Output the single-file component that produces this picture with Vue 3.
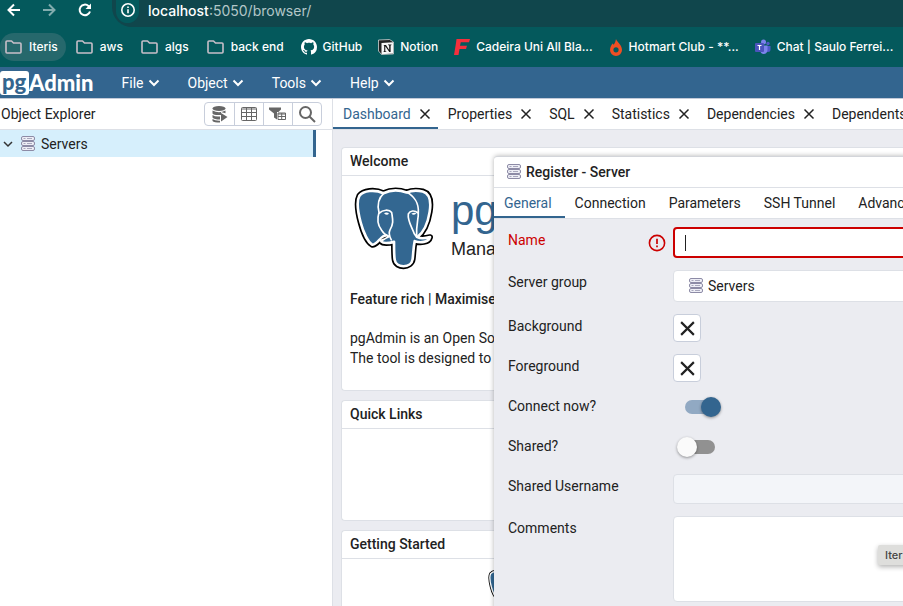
<script setup>
import { ref, h } from 'vue'

const menus = ['File', 'Object', 'Tools', 'Help']
const panels = ['Dashboard', 'Properties', 'SQL', 'Statistics', 'Dependencies', 'Dependents']
const dialogTabs = ['General', 'Connection', 'Parameters', 'SSH Tunnel', 'Advanced']
const bookmarks = [
  { label: 'Iteris', icon: 'folder', active: true },
  { label: 'aws', icon: 'folder' },
  { label: 'algs', icon: 'folder' },
  { label: 'back end', icon: 'folder' },
  { label: 'GitHub', icon: 'github' },
  { label: 'Notion', icon: 'notion' },
  { label: 'Cadeira Uni All Bla...', icon: 'f' },
  { label: 'Hotmart Club - **...', icon: 'flame' },
  { label: 'Chat | Saulo Ferrei...', icon: 'teams' },
]

const name = ref('')
const connectNow = ref(true)
const shared = ref(false)
const sharedUsername = ref('')
const comments = ref('')

const ServerIcon = () =>
  h('svg', { width: 14, height: 16, viewBox: '0 0 14 16', 'aria-hidden': 'true' },
    [1, 6, 11].flatMap((y) => [
      h('rect', { x: 0.5, y: y - 0.5, width: 13, height: 4, rx: 1.5, fill: '#eeeef6', stroke: '#8d8ba6' }),
      h('path', { d: `M2.5 ${y + 1.5}h2M6 ${y + 1.5}h5`, stroke: '#a9a8bd' }),
    ]))

const CloseIcon = () =>
  h('svg', { width: 12, height: 12, viewBox: '0 0 12 12', 'aria-hidden': 'true' },
    [h('path', { d: 'M1.5 1.5l9 9M10.5 1.5l-9 9', stroke: 'currentColor', 'stroke-width': 1.5, fill: 'none' })])

const outline = 'M152 158C126 146 92 150 80 166C70 184 76 216 84 246C92 276 106 305 118 312C126 316 136 302 146 292C152 286 160 284 166 288C154 294 146 298 146 303C152 310 168 308 184 304C184 324 184 346 186 358C190 384 236 384 240 356C242 340 242 322 246 302C262 308 288 306 292 290C284 292 266 296 254 290C272 276 286 246 291 214C296 184 294 160 270 153C252 149 236 150 222 156C200 148 174 148 152 158Z'
const Elephant = () =>
  h('svg', { viewBox: '64 140 240 248', 'aria-hidden': 'true' }, [
    h('path', { d: outline, fill: '#000', stroke: '#000', 'stroke-width': 18, 'stroke-linejoin': 'round' }),
    h('path', { d: outline, fill: '#336791', stroke: '#fff', 'stroke-width': 8, 'stroke-linejoin': 'round' }),
    h('path', {
      d: 'M154 158C138 172 133 192 139 216C134 232 134 252 146 268C152 278 158 284 168 288M140 218C150 207 170 206 177 216C180 236 184 248 172 268C168 276 168 284 176 298M222 155C244 166 258 188 257 214C258 236 250 252 252 286M256 218C246 208 232 210 227 220C224 240 236 256 245 280L252 290',
      fill: 'none', stroke: '#fff', 'stroke-width': 5, 'stroke-linecap': 'round', 'stroke-linejoin': 'round',
    }),
    h('path', { d: 'M154 218q8-4 15 1q-6 8-15-1ZM236 220q8-5 15-2q-7 9-15 2Z', fill: '#fff' }),
    h('path', { d: 'M144 297q8-8 20-10q-8 8-20 10Z', fill: '#000' }),
  ])
</script>

<template>
  <div class="page">
    <header class="chrome">
      <div class="toolbar">
        <button class="nav" aria-label="Back">
          <svg width="14" height="14" viewBox="0 0 14 14"><path d="M13 7H2M7 1.500L1.500 7L7 12.500" /></svg>
        </button>
        <button class="nav dim" aria-label="Forward">
          <svg width="14" height="14" viewBox="0 0 14 14"><path d="M1 7H12M7 1.500L12.500 7L7 12.500" /></svg>
        </button>
        <button class="nav" aria-label="Reload">
          <svg width="14" height="14" viewBox="0 0 14 14"><path d="M12 8.500A5.300 5.300 0 1 1 10.500 3L12 4.500" /><path class="solid" d="M13 .5V6H7.500Z" /></svg>
        </button>
        <div class="address">
          <span class="info">
            <svg width="16" height="16" viewBox="0 0 16 16"><circle cx="8" cy="8" r="6.200" fill="none" stroke="#fff" stroke-width="1.600" /><path d="M8 7.200V11.300M8 4.600V6.100" stroke="#fff" stroke-width="1.600" /></svg>
          </span>
          <span class="url"><b>localhost</b>:5050/browser/</span>
        </div>
      </div>
      <nav class="bookmarks">
        <a v-for="b in bookmarks" :key="b.label" href="#" class="bookmark" :class="{ active: b.active, folder: b.icon === 'folder' }">
          <svg v-if="b.icon === 'folder'" width="17" height="16" viewBox="0 0 17 16"><path d="M1 3Q1 2 2 2H6.500L8.500 4H15Q16 4 16 5V13Q16 14 15 14H2Q1 14 1 13Z" fill="none" stroke="#c9bfc9" stroke-width="1.600" stroke-linejoin="round" /></svg>
          <svg v-else-if="b.icon === 'github'" width="16" height="16" viewBox="0 0 16 16"><path fill="#fff" d="M8 0C3.580 0 0 3.580 0 8c0 3.540 2.290 6.530 5.470 7.590.4.070.55-.17.55-.38 0-.19-.01-.82-.01-1.490-2.010.37-2.530-.49-2.690-.94-.09-.23-.48-.94-.82-1.130-.28-.15-.68-.52-.01-.53.63-.01 1.080.58 1.230.82.72 1.210 1.870.87 2.330.66.07-.52.28-.87.51-1.070-1.780-.2-3.640-.89-3.640-3.950 0-.87.31-1.590.82-2.150-.08-.2-.36-1.020.08-2.120 0 0 .67-.21 2.200.82.64-.18 1.320-.27 2-.27s1.360.09 2 .27c1.530-1.040 2.200-.82 2.200-.82.44 1.100.16 1.920.08 2.120.51.56.82 1.270.82 2.150 0 3.070-1.870 3.750-3.650 3.950.29.25.54.73.54 1.480 0 1.070-.01 1.930-.01 2.200 0 .21.15.46.55.38A8.010 8.010 0 0 0 16 8c0-4.420-3.580-8-8-8Z" /></svg>
          <svg v-else-if="b.icon === 'notion'" width="16" height="16" viewBox="0 0 16 16"><path d="M.5 1L11.500 .5L15.500 3V15L3.500 15.500L.5 12Z" fill="#222" stroke="#e8e8e8" stroke-width=".7" /><path d="M3.500 4L15 3.300V14.500L3.500 15.200Z" fill="#f7f7f7" /><path d="M5.500 6H8L11.200 11V6.400L10 6V5.600H13.500V6L12.600 6.400V13H11.300L7.300 7.200V12.300L8.500 12.700V13H5.300V12.700L6.200 12.300V6.800Z" fill="#111" /></svg>
          <svg v-else-if="b.icon === 'f'" width="16" height="16" viewBox="0 0 16 16"><path d="M2.500 0H16L15 3.200H6.800L6 6.800H13L12 10H5.500L4.500 16H0L2 4Z" fill="#f52f3c" /></svg>
          <svg v-else-if="b.icon === 'flame'" width="14" height="17" viewBox="0 0 14 17"><path d="M7 0C8 3 13 6 13 11A6 6 0 0 1 1 11C1 8 2.500 6 3.500 4.500L4.800 5.800Q6.500 3.500 7 0Z" fill="#f04e23" /><circle cx="7" cy="10.800" r="2.600" fill="#04595c" /></svg>
          <svg v-else width="16" height="16" viewBox="0 0 16 16"><circle cx="13" cy="4.500" r="1.700" fill="#5059c9" /><circle cx="8.500" cy="3" r="2.500" fill="#7b83eb" /><path d="M11 7H15.500V11Q15.500 13 13 13H11Z" fill="#5059c9" /><path d="M5 6.500H12.500V11Q12 15 8.700 15Q5.500 15 5 11Z" fill="#7b83eb" /><rect y="4" width="9" height="9" rx="1" fill="#4b53bc" /><path d="M2.500 6.500H6.500M4.500 6.500V11" stroke="#fff" stroke-width="1.200" /></svg>
          <span>{{ b.label }}</span>
        </a>
      </nav>
    </header>

    <div class="appbar">
      <div class="brand"><span class="pg">pg</span><span class="admin">Admin</span></div>
      <button v-for="m in menus" :key="m" class="menu">
        {{ m }}
        <svg width="12" height="8" viewBox="0 0 12 8"><path d="M1.500 1.500L6 6L10.500 1.500" fill="none" stroke="currentColor" stroke-width="2" /></svg>
      </button>
    </div>

    <div class="workspace">
      <aside class="explorer">
        <div class="explorer-head">
          <span>Object Explorer</span>
          <div class="tools">
            <button aria-label="Query tool">
              <svg width="18" height="18" viewBox="0 0 18 18"><ellipse cx="8" cy="3.500" rx="6.500" ry="2.500" /><path d="M1.500 5.500Q8 9 14.500 5.500V8.200L10 7V10H5Q2 9.500 1.500 8.500ZM1.500 10Q4 12 9 11.500V14.500Q3 14.500 1.500 12.500ZM1.500 14Q4 16 9 15.800V17.500Q3 17.500 1.500 16Z" /><path d="M10 8L16.500 12L10 16.500Z" /></svg>
            </button>
            <button aria-label="View data">
              <svg width="18" height="16" viewBox="0 0 18 16"><path class="line" d="M1.500 2.500Q1.500 1.500 2.500 1.500H15.500Q16.500 1.500 16.500 2.500V13.500Q16.500 14.500 15.500 14.500H2.500Q1.500 14.500 1.500 13.500ZM1.500 3H16.500M1.500 6.500H16.500M1.500 10.500H16.500M6.500 2V14.500M11.500 2V14.500" /></svg>
            </button>
            <button aria-label="Filtered rows">
              <svg width="18" height="16" viewBox="0 0 18 16"><path d="M0 1.500H12V3.500L8 7.500V13.500L5 11.500V7.500L0 3.500Z" /><rect x="8" y="6" width="10" height="8.500" fill="#fff" /><path class="line" d="M9 7H16.500V13.500H9ZM9 8H16.500M9 10.500H16.500M12.700 7V13.500" /></svg>
            </button>
            <button aria-label="Search objects">
              <svg width="18" height="18" viewBox="0 0 18 18"><circle class="line" cx="7.500" cy="7.500" r="5.500" stroke-width="2" /><path class="line" d="M11.500 11.500L17 17" stroke-width="2" /></svg>
            </button>
          </div>
        </div>
        <div class="tree-row">
          <svg width="10" height="8" viewBox="0 0 10 8"><path d="M1 2L5 6L9 2" fill="none" stroke="#333" stroke-width="1.500" /></svg>
          <ServerIcon />
          <span>Servers</span>
        </div>
      </aside>

      <main class="content">
        <div class="tabs">
          <div v-for="(p, i) in panels" :key="p" class="tab" :class="{ current: i === 0 }">
            <a href="#">{{ p }}</a>
            <button class="close" :aria-label="'Close ' + p"><CloseIcon /></button>
          </div>
        </div>
        <div class="dashboard">
          <section class="card">
            <h2>Welcome</h2>
            <div class="welcome">
              <div class="hero">
                <Elephant class="mascot" />
                <div>
                  <div class="product">pgAdmin</div>
                  <div class="subtitle">Management</div>
                </div>
              </div>
              <h3>Feature rich | Maximises</h3>
              <p>pgAdmin is an Open Source<br />The tool is designed to</p>
            </div>
          </section>
          <section class="card">
            <h2>Quick Links</h2>
            <div class="links"></div>
          </section>
          <section class="card">
            <h2>Getting Started</h2>
            <div class="started"><Elephant class="small-mascot" /></div>
          </section>
        </div>
      </main>
    </div>

    <div class="dialog" role="dialog" aria-labelledby="dialog-title">
      <div class="dialog-head"><ServerIcon /><span id="dialog-title">Register - Server</span></div>
      <div class="dialog-tabs">
        <a v-for="(t, i) in dialogTabs" :key="t" href="#" :class="{ current: i === 0 }">{{ t }}</a>
      </div>
      <form class="form" @submit.prevent>
        <div class="row">
          <label for="name" class="error">Name</label>
          <svg class="alert" width="18" height="18" viewBox="0 0 18 18"><circle cx="9" cy="9" r="7.600" fill="none" stroke="#c00" stroke-width="1.600" /><path d="M9 4.800V10M9 11.500V13.200" stroke="#c00" stroke-width="1.700" /></svg>
          <div class="field invalid"><span class="caret"></span><input id="name" v-model="name" type="text" /></div>
        </div>
        <div class="row">
          <label for="group">Server group</label>
          <div class="field group"><ServerIcon /><select id="group"><option>Servers</option></select></div>
        </div>
        <div class="row">
          <label for="bg">Background</label>
          <button id="bg" type="button" class="swatch"><CloseIcon /></button>
        </div>
        <div class="row">
          <label for="fg">Foreground</label>
          <button id="fg" type="button" class="swatch"><CloseIcon /></button>
        </div>
        <div class="row">
          <label for="connect">Connect now?</label>
          <input id="connect" v-model="connectNow" type="checkbox" class="switch" />
        </div>
        <div class="row">
          <label for="shared">Shared?</label>
          <input id="shared" v-model="shared" type="checkbox" class="switch" />
        </div>
        <div class="row">
          <label for="username">Shared Username</label>
          <input id="username" v-model="sharedUsername" type="text" class="field off" disabled />
        </div>
        <div class="row">
          <label for="comments">Comments</label>
          <textarea id="comments" v-model="comments" class="field"></textarea>
        </div>
      </form>
    </div>

    <div class="tooltip" role="tooltip">Iteris</div>
  </div>
</template>

<style>
body { overflow: hidden; }
</style>

<style scoped>
* { box-sizing: border-box; }
.page {
  position: relative;
  display: flex;
  flex-direction: column;
  height: 100vh;
  overflow: hidden;
  font: 14px/20px Roboto, sans-serif;
  color: #222;
  background: #fff;
}
svg { display: block; flex: none; }
a { color: inherit; text-decoration: none; }
button { border: 0; padding: 0; background: none; font: inherit; color: inherit; }

.chrome { background: #04595c; color: #fff; }
.toolbar { display: flex; height: 27px; }
.nav { display: flex; justify-content: center; width: 36px; padding-top: 3px; }
.nav:first-child { width: 28px; }
.nav svg { fill: none; stroke: #fff; stroke-width: 2; }
.nav .solid { fill: #fff; stroke: none; }
.nav.dim { width: 42px; opacity: 0.5; }
.nav.dim + .nav { width: 30px; }
.address {
  flex: 1;
  display: flex;
  gap: 9px;
  margin-left: 12px;
  padding-left: 4px;
  background: #10464c;
  border-bottom-left-radius: 20px;
}
.info {
  display: flex;
  justify-content: center;
  width: 23px;
  height: 23px;
  padding-top: 2px;
  border-radius: 0 0 12px 12px;
  background: #04595c;
}
.url { font: 14px/21px Inter, sans-serif; color: #b3c6c8; }
.url b { font-weight: 500; color: #fff; }
.bookmarks { display: flex; gap: 2px; padding: 6px 0; font: 500 12px/28px Inter, sans-serif; white-space: nowrap; }
.bookmark { display: flex; align-items: center; gap: 6px; height: 28px; padding: 0 7px; border-radius: 14px; }
.bookmark.folder { gap: 7px; padding: 0 8px; }
.bookmark.active { padding: 0 8px 0 5px; background: #26686c; }

.appbar { display: flex; align-items: center; gap: 28px; height: 31px; background: #33658f; color: #fff; }
.brand { display: flex; align-items: center; font: 900 22px/24px Lato, sans-serif; }
.pg { width: 29px; height: 24px; line-height: 21px; padding-left: 2px; border-radius: 3px; background: #fff; color: #33658f; }
.menu { display: flex; align-items: center; gap: 4px; }

.workspace { flex: 1; display: flex; min-height: 0; border-top: 1px solid #c3cad8; }
.explorer { flex: none; width: 333px; border-right: 1px solid #dde0e6; }
.explorer-head {
  display: flex;
  justify-content: space-between;
  align-items: center;
  height: 31px;
  padding: 0 10px 0 1px;
  border-bottom: 1px solid #dde0e6;
}
.tools { display: flex; border: 1px solid #c8cedb; border-radius: 4px; }
.tools button { display: flex; align-items: center; justify-content: center; width: 29px; height: 22px; }
.tools button + button { border-left: 1px solid #c8cedb; }
.tools svg { fill: #666; }
.tools .line { fill: none; stroke: #666; }
.tree-row {
  display: flex;
  align-items: center;
  gap: 6px;
  height: 27px;
  margin-right: 16px;
  padding-left: 3px;
  background: #d6effc;
  border-right: 3px solid #33658f;
}
.tree-row svg:first-child { margin-right: 2px; }

.content { flex: 1; display: flex; flex-direction: column; min-width: 0; background: #ebecf1; }
.tabs { display: flex; height: 31px; overflow: hidden; background: #fff; border-bottom: 1px solid #dde0e6; }
.tab { flex: none; display: flex; align-items: center; gap: 8px; padding: 0 7px 0 10px; }
.tab.current { color: #33658f; border-bottom: 2px solid #33658f; padding-top: 2px; }
.close { color: #222; }
.dashboard { flex: 1; display: flex; flex-direction: column; gap: 9px; padding: 17px 0 0 8px; overflow: hidden; }
.card { flex: none; background: #fff; border: 1px solid #dde0e6; border-right: 0; border-radius: 4px 0 0 4px; overflow: hidden; }
h2 { margin: 0; padding: 3px 8px 4px; height: 28px; border-bottom: 1px solid #dde0e6; font: 500 14px/20px Roboto, sans-serif; }
.welcome { height: 214px; padding: 11px 8px; white-space: nowrap; }
.hero { display: flex; gap: 17px; padding-left: 4px; }
.mascot { width: 80px; height: 83px; }
.product { font: 42px/48px "Liberation Sans", sans-serif; color: #33658f; }
.subtitle { font: 18px/28px "Liberation Sans", sans-serif; }
h3 { margin: 19px 0; font: 500 14px/20px Roboto, sans-serif; }
p { margin: 0; }
.links { height: 91px; }
.started { padding: 10px 0 40px 146px; }
.small-mascot { width: 40px; height: 42px; }

.dialog {
  position: absolute;
  left: 494px;
  top: 156px;
  width: 800px;
  background: #ebecf1;
  border-top: 1px solid #d3d5da;
  border-radius: 4px;
  box-shadow: 0 0 5px rgba(0, 0, 0, 0.3);
  overflow: hidden;
}
.dialog-head { display: flex; align-items: center; gap: 5px; height: 31px; padding-left: 13px; background: #fff; font-weight: 500; border-bottom: 1px solid #dde0e6; }
.dialog-tabs { display: flex; height: 31px; background: #fff; border-bottom: 1px solid #dde0e6; }
.dialog-tabs a { padding: 5px 13px 0 10px; }
.dialog-tabs .current { color: #33658f; border-bottom: 2px solid #33658f; }
.form { display: flex; flex-direction: column; gap: 12px; padding: 8px 14px 40px; }
.row { display: grid; grid-template-columns: 140px 25px 1fr; align-items: start; min-height: 28px; }
.row > :last-child { grid-column: 3; }
.row label { padding-top: 2px; }
.row .error { padding-top: 3px; color: #c00; }
.alert { margin-top: 7px; }
.field { display: flex; align-items: center; width: 100%; min-height: 30px; border: 1px solid #dde0e6; border-radius: 4px; background: #fff; }
.invalid { height: 31px; border: 2px solid #c00; padding-left: 10px; }
.field input, .field select { flex: 1; border: 0; padding: 0; outline: 0; background: none; font: inherit; color: inherit; appearance: none; }
.caret { width: 1px; height: 16px; background: #222; }
.group { height: 32px; gap: 5px; padding-left: 15px; }
.off { background: #f3f5f9; }
textarea.field { height: 86px; resize: none; }
.swatch { display: flex; align-items: center; justify-content: center; width: 28px; height: 28px; background: #fff; border: 1px solid #c8cedb; border-radius: 4px; }
.swatch svg { width: 17px; height: 17px; }
.switch { appearance: none; position: relative; width: 34px; height: 14px; margin: 6px 8px; border-radius: 7px; background: #919191; }
.switch::before {
  content: "";
  position: absolute;
  left: -4px;
  top: -3px;
  width: 20px;
  height: 20px;
  border-radius: 50%;
  background: #fafafa;
  box-shadow: 0 1px 3px rgba(0, 0, 0, 0.4);
}
.switch:checked { background: #91a9c3; margin-left: 12px; }
.switch:checked::before { left: 16px; background: #33658f; }

.tooltip {
  position: absolute;
  left: 878px;
  top: 545px;
  padding: 0 7px;
  background: #dededc;
  border-radius: 2px;
  box-shadow: 0 2px 5px rgba(0, 0, 0, 0.3);
  font: 500 11px/20px Inter, sans-serif;
  color: #444;
}
</style>
